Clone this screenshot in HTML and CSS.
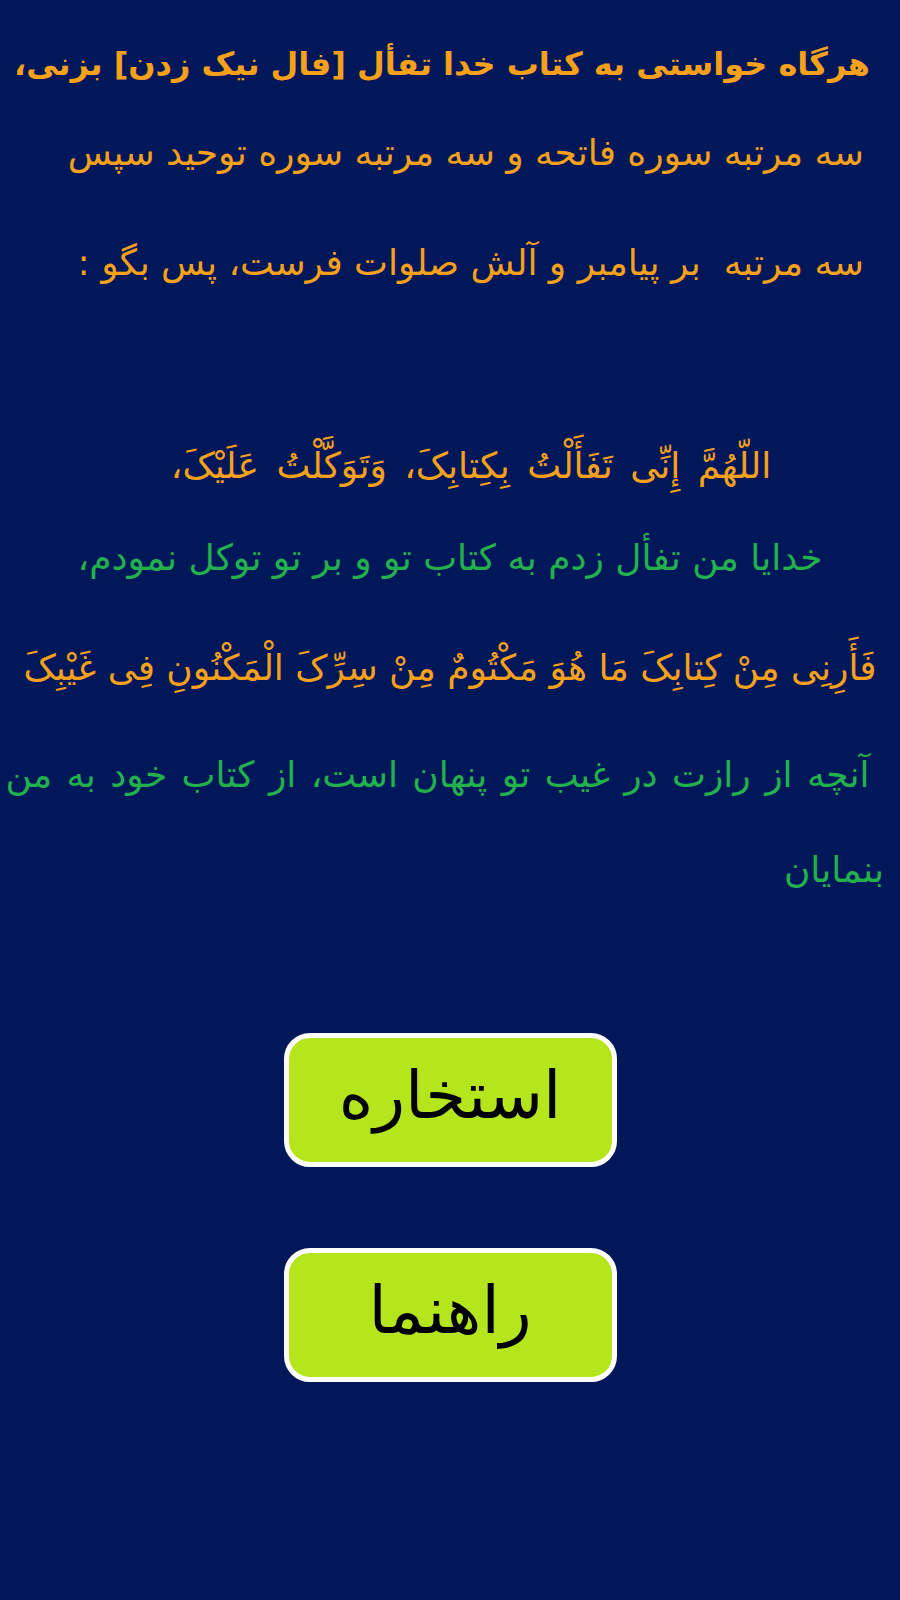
FILE: index.html
```html
<!DOCTYPE html>
<html lang="fa" dir="rtl">
<head>
    <meta charset="UTF-8">
    <meta name="viewport" content="width=device-width, initial-scale=1.0">
    <title>استخاره</title>
    <link rel="stylesheet" href="styles.css">
</head>
<body>
    <div class="page">
        <!-- Instructions -->
        <div class="intro">
            <p class="intro-title">هرگاه خواستی به کتاب خدا تفأل [فال نیک زدن] بزنی،</p>
            <p class="intro-line first">سه مرتبه سوره فاتحه و سه مرتبه سوره توحید سپس</p>
            <p class="intro-line">سه مرتبه&nbsp; بر پیامبر و آلش صلوات فرست، پس بگو :</p>
        </div>

        <!-- Prayer -->
        <div class="prayer">
            <p class="arabic opening">اللّهُمَّ إِنِّی تَفَأَلْتُ بِکِتابِکَ، وَتَوَکَّلْتُ عَلَیْکَ،</p>
            <p class="farsi center">خدایا من تفأل زدم به کتاب تو و بر تو توکل نمودم،</p>
            <p class="arabic request">فَأَرِنِی مِنْ کِتابِکَ مَا هُوَ مَکْتُومٌ مِنْ سِرِّکَ الْمَکْنُونِ فِی غَیْبِکَ</p>
            <p class="farsi start">&nbsp;آنچه از رازت در غیب تو پنهان است، از کتاب خود به من بنمایان</p>
        </div>

        <!-- Buttons -->
        <div class="actions">
            <button class="btn">استخاره</button>
            <button class="btn">راهنما</button>
        </div>
    </div>
</body>
</html>
```

FILE: styles.css
```css
/* Page */
body {
    margin: 0;
    background-color: #00185a;
    font-family: "DejaVu Sans", sans-serif;
}
.page {
    min-height: 1600px;
    padding-top: 34px;
    box-sizing: border-box;
}
p {
    margin: 0;
}
/* Instructions block */
.intro {
    color: #f7a01a;
}
.intro-title {
    font-size: 32px;
    font-weight: bold;
    line-height: 60px;
    padding-right: 30px;
}
.intro-line {
    font-size: 36px;
    line-height: 110px;
    padding-right: 36px;
}
.intro-line.first {
    margin-top: 4px;
}
/* Prayer block */
.prayer {
    margin-top: 102px;
    font-size: 36px;
    line-height: 92px;
}
.arabic {
    color: #f7a01a;
    text-align: center;
}
.arabic.opening {
    padding-left: 42px;
    word-spacing: 6px;
}
.arabic.request {
    margin-top: 18px;
}
.farsi {
    color: #22b14c;
}
.farsi.center {
    text-align: center;
}
.farsi.start {
    margin-top: 13px;
    line-height: 95px;
    padding-right: 16px;
    word-spacing: 3px;
}
/* Buttons */
.actions {
    margin-top: 116px;
    display: flex;
    flex-direction: column;
    align-items: center;
    gap: 81px;
}
.btn {
    width: 333px;
    height: 134px;
    padding: 0 0 10px;
    background-color: #b5e61d;
    border: 5px solid #ffffff;
    border-radius: 26px;
    font-family: "DejaVu Sans", sans-serif;
    font-size: 66px;
    color: #000000;
    cursor: pointer;
}
```
